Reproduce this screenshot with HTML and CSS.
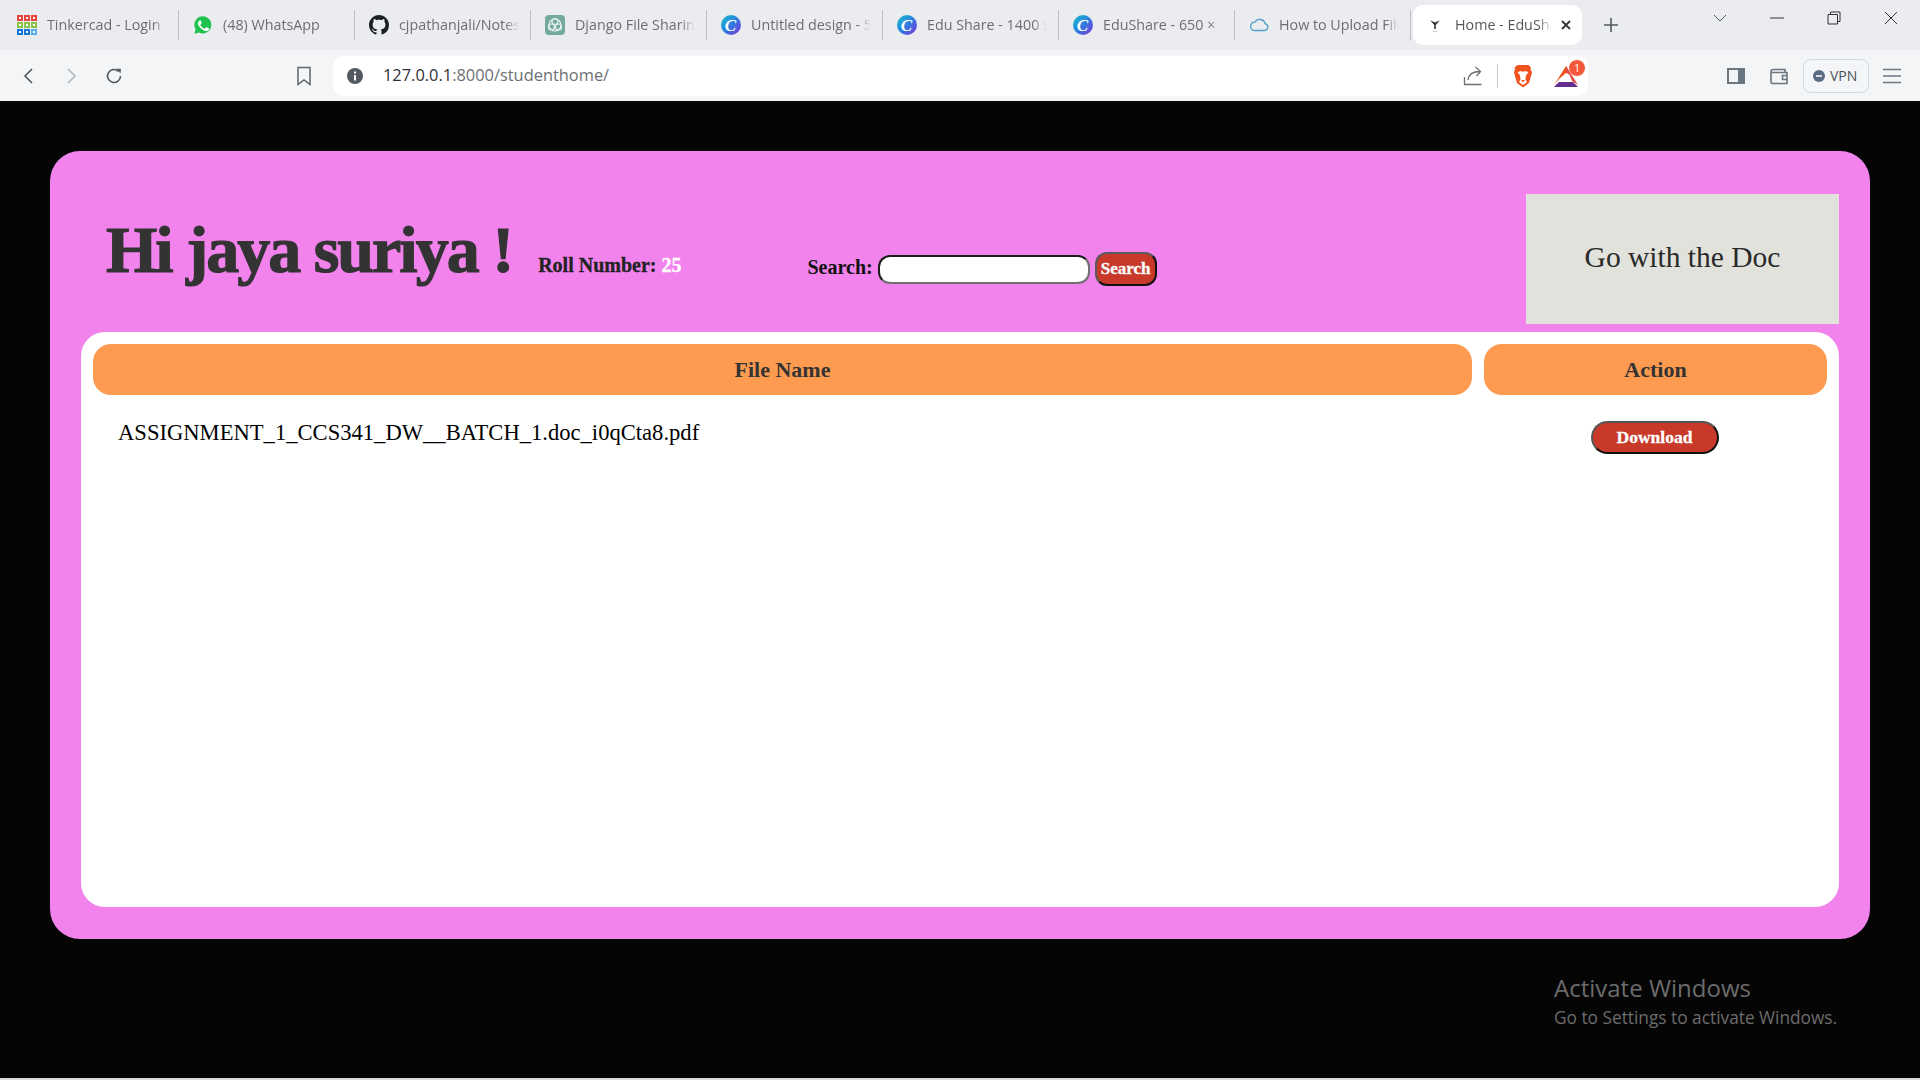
FILE: index.html
```html
<!DOCTYPE html>
<html lang="en">
<head>
<meta charset="utf-8">
<title>Home - EduShare</title>
<link rel="stylesheet" href="styles.css">
</head>
<body>
<div class="window">
  <div class="tabstrip">
    <div class="tab">
      <svg class="fav" viewBox="0 0 20 20"><g fill="#e8453c"><rect width="6" height="6"/><rect x="7" width="6" height="6"/><rect x="14" width="6" height="6"/></g><g fill="#8bc34a"><rect y="7" width="6" height="6"/><rect x="7" y="7" width="6" height="6"/><rect x="14" y="7" width="6" height="6"/></g><g fill="#1477d4"><rect y="14" width="6" height="6"/><rect x="7" y="14" width="6" height="6"/><rect x="14" y="14" width="6" height="6" fill="#5ab0e6"/></g><g fill="#fff"><rect x="2" y="2" width="2" height="2"/><rect x="9" y="2" width="2" height="2"/><rect x="16" y="2" width="2" height="2"/><rect x="2" y="9" width="2" height="2"/><rect x="9" y="9" width="2" height="2"/><rect x="16" y="9" width="2" height="2"/><rect x="2" y="16" width="2" height="2"/><rect x="9" y="16" width="2" height="2"/><rect x="16" y="16" width="2" height="2"/></g></svg>
      <span class="title">Tinkercad - Login</span>
    </div>
    <div class="tab">
      <svg class="fav" viewBox="0 0 20 20"><path fill="#1fc14f" d="M10 1.200a8.600 8.600 0 0 0-7.400 13L1.400 18.800l4.700-1.200A8.600 8.600 0 1 0 10 1.200z"/><path fill="#fff" d="M7 5.400c-.3 0-.7.1-1 .5-.4.5-1 1.200-1 2.500s1 2.700 1.100 2.900c.2.200 1.900 3 4.700 4.100 2.300.9 2.800.7 3.300.7.500-.1 1.600-.7 1.800-1.300.2-.6.2-1.200.2-1.300-.1-.1-.3-.2-.6-.4l-1.900-.9c-.3-.1-.5-.1-.7.2l-.9 1.100c-.2.200-.3.200-.6.100-.3-.2-1.200-.5-2.300-1.400-.8-.8-1.400-1.700-1.600-2-.1-.3 0-.4.100-.6l.9-1.100c.1-.2.100-.4 0-.5L8 6c-.2-.5-.4-.6-.6-.6z"/></svg>
      <span class="title">(48) WhatsApp</span>
    </div>
    <div class="tab">
      <svg class="fav" viewBox="0 0 16 16"><path fill="#1b1f23" d="M8 0C3.580 0 0 3.580 0 8c0 3.540 2.290 6.530 5.470 7.590.4.070.55-.170.55-.380 0-.190-.010-.820-.010-1.490-2.010.370-2.530-.490-2.690-.940-.090-.230-.480-.940-.820-1.130-.280-.150-.680-.520-.010-.530.630-.010 1.080.580 1.230.820.720 1.210 1.870.870 2.330.660.070-.520.280-.870.510-1.070-1.780-.200-3.640-.890-3.640-3.950 0-.870.310-1.590.820-2.150-.080-.200-.360-1.020.080-2.120 0 0 .670-.210 2.200.820.640-.180 1.320-.270 2-.270s1.360.090 2 .270c1.530-1.040 2.200-.820 2.200-.820.440 1.100.160 1.920.080 2.120.510.560.820 1.270.820 2.150 0 3.070-1.870 3.750-3.650 3.950.290.250.540.730.540 1.480 0 1.070-.010 1.930-.010 2.200 0 .210.150.460.550.380A8.010 8.010 0 0 0 16 8c0-4.420-3.580-8-8-8z"/></svg>
      <span class="title">cjpathanjali/Notes</span>
    </div>
    <div class="tab">
      <svg class="fav" viewBox="0 0 20 20"><rect width="20" height="20" rx="4" fill="#74aa9c"/><g fill="none" stroke="#e6f2ef" stroke-width="1.200"><circle cx="10" cy="6.500" r="3"/><circle cx="6.500" cy="12" r="3"/><circle cx="13.500" cy="12" r="3"/><circle cx="10" cy="10" r="6"/></g></svg>
      <span class="title">Django File Sharing</span>
    </div>
    <div class="tab">
      <svg class="fav" viewBox="0 0 20 20"><defs><linearGradient id="cv" x1="0" y1="0" x2="1" y2="1"><stop offset="0" stop-color="#10c5c9"/><stop offset=".5" stop-color="#2f7ee0"/><stop offset="1" stop-color="#7b2fd8"/></linearGradient></defs><circle cx="10" cy="10" r="10" fill="url(#cv)"/><text x="9.500" y="15.500" class="canva">C</text></svg>
      <span class="title">Untitled design - 5</span>
    </div>
    <div class="tab">
      <svg class="fav" viewBox="0 0 20 20"><circle cx="10" cy="10" r="10" fill="url(#cv)"/><text x="9.500" y="15.500" class="canva">C</text></svg>
      <span class="title">Edu Share - 1400 x</span>
    </div>
    <div class="tab">
      <svg class="fav" viewBox="0 0 20 20"><circle cx="10" cy="10" r="10" fill="url(#cv)"/><text x="9.500" y="15.500" class="canva">C</text></svg>
      <span class="title">EduShare - 650 × 1</span>
    </div>
    <div class="tab">
      <svg class="fav" viewBox="0 0 20 20"><path fill="none" stroke="#4f9fc9" stroke-width="1.300" d="M5 15.500h10.500a3.500 3.500 0 0 0 .6-6.900A5.500 5.500 0 0 0 6 7.200 4.200 4.200 0 0 0 5 15.500z"/></svg>
      <span class="title">How to Upload Files</span>
    </div>
    <div class="tab-active">
      <svg class="fav-small" viewBox="0 0 20 20"><path fill="#333" d="M4 4l5 6v5h2v-5l5-6-6 3z"/><path fill="#ccc" d="M7 17h6v1.500H7z"/></svg>
      <span class="title-active">Home - EduShare</span>
      <svg class="tab-close" viewBox="0 0 12 12"><path stroke="#333" stroke-width="1.800" d="M2 2l8 8M10 2l-8 8"/></svg>
    </div>
    <svg class="new-tab" viewBox="0 0 16 16"><path stroke="#55585c" stroke-width="1.600" d="M8 1v14M1 8h14"/></svg>
    <div class="win-controls">
      <svg class="win-icon" viewBox="0 0 14 14"><path fill="none" stroke="#55585c" d="M1 4l6 6 6-6"/></svg>
      <svg class="win-icon" viewBox="0 0 14 14"><path stroke="#333" d="M0 7h14"/></svg>
      <svg class="win-icon" viewBox="0 0 14 14"><path fill="none" stroke="#333" d="M1 3.500h9.500V13H1zM3.500 3.500V1H13v9.500h-2.500"/></svg>
      <svg class="win-icon" viewBox="0 0 14 14"><path stroke="#333" d="M1 1l12 12M13 1L1 13"/></svg>
    </div>
  </div>

  <div class="toolbar">
    <svg class="nav-icon" viewBox="0 0 18 18"><path fill="none" stroke="#50565c" stroke-width="1.600" d="M13 2L6 9l7 7"/></svg>
    <svg class="nav-icon" viewBox="0 0 18 18"><path fill="none" stroke="#b4bac0" stroke-width="1.600" d="M6 2l7 7-7 7"/></svg>
    <svg class="nav-icon" viewBox="0 0 18 18"><path fill="none" stroke="#50565c" stroke-width="1.600" d="M15.500 9a6.500 6.500 0 1 1-2-4.700"/><path fill="#50565c" d="M11.500 1.500l4.500.5-.5 4.500z"/></svg>
    <svg class="bookmark" viewBox="0 0 16 20"><path fill="none" stroke="#5f666d" stroke-width="1.500" d="M2 1.500h12v17l-6-4.500-6 4.500z"/></svg>
    <div class="address">
      <svg class="info" viewBox="0 0 16 16"><circle cx="8" cy="8" r="8" fill="#54595f"/><path fill="#fff" d="M7 7h2v5.500H7zM7 3.500h2v2H7z"/></svg>
      <span class="url"><span class="host">127.0.0.1</span>:8000/studenthome/</span>
      <svg class="share" viewBox="0 0 20 20"><path fill="none" stroke="#6a7076" stroke-width="1.300" d="M1.500 11v7.500h17M5 14c.5-5 4-8.500 12-8.500M12.500 1L17.500 5.500 13.500 10"/></svg>
      <span class="addr-sep"></span>
      <svg class="brave" viewBox="0 0 20 24"><path fill="#f1531f" d="M4.500 1h11l2.500 2.500-.5 1.500 1.500 3.500-3 10.500-6 4.500-6-4.500-3-10.500L2 5l-.5-1.500z"/><path fill="#fff" d="M4.500 8l4-1 1.500 1 1.500-1 4 1-2.500 3.500-.5 4 1.500 2.500-4 3-4-3 1.500-2.500-.5-4z"/><path fill="#f1531f" d="M8 16h4l-2 2.500z"/></svg>
      <div class="bat">
        <svg class="bat-icon" viewBox="0 0 24 22"><path fill="#e8483c" d="M12 1l5 9-5-2z"/><path fill="#f1531f" d="M12 1v7l-7 6-5 6z"/><path fill="#e8483c" d="M12 1l12 19-6-4z"/><path fill="#662d91" d="M0 22l5-5h14l5 5z"/><path fill="#fff" d="M12 9l4.500 7h-9z"/></svg>
        <span class="badge">1</span>
      </div>
    </div>
    <svg class="tool-icon sidebar" viewBox="0 0 20 20"><path fill="none" stroke="#6a7680" stroke-width="2" d="M2 3h16v14H2z"/><path fill="#6a7680" d="M12 3h6v14h-6z"/></svg>
    <svg class="tool-icon wallet" viewBox="0 0 20 20"><path fill="none" stroke="#6a7680" stroke-width="1.600" d="M2 5.500a2 2 0 0 1 2-2h12v3M2 5.500V16a1.500 1.500 0 0 0 1.500 1.500H18v-11H3.500A1.500 1.500 0 0 1 2 5.500zM18 9.500h-4.500v4H18"/></svg>
    <div class="vpn">
      <svg class="vpn-dot" viewBox="0 0 12 12"><circle cx="6" cy="6" r="6" fill="#5c6b85"/><path stroke="#fff" stroke-width="1.500" d="M3 6h6"/></svg>
      <span>VPN</span>
    </div>
    <svg class="tool-icon menu" viewBox="0 0 18 18"><path stroke="#6a7680" stroke-width="1.400" d="M0 2.500h18M0 9h18M0 15.500h18"/></svg>
  </div>

  <main class="viewport">
    <section class="card">
      <header class="head">
        <div class="greeting">
          <div class="intro">
            <h1 class="hello">Hi jaya suriya !</h1>
            <p class="roll">Roll Number: <span class="roll-no">25</span></p>
          </div>
          <form class="search">
            <label class="search-label" for="q">Search:</label>
            <input class="search-input" id="q" type="text">
            <button class="search-btn" type="button">Search</button>
          </form>
        </div>
        <div class="logo">Go with the Doc</div>
      </header>
      <div class="panel">
        <div class="col-head">File Name</div>
        <div class="col-head">Action</div>
        <div class="file-name">ASSIGNMENT_1_CCS341_DW__BATCH_1.doc_i0qCta8.pdf</div>
        <div class="file-action"><button class="download" type="button">Download</button></div>
      </div>
    </section>
    <div class="watermark">
      <div class="wm-title">Activate Windows</div>
      <div class="wm-sub">Go to Settings to activate Windows.</div>
    </div>
  </main>
  <div class="strip"></div>
</div>
</body>
</html>
```

FILE: styles.css
```css
* { box-sizing: border-box; }
html, body { margin: 0; padding: 0; height: 100%; overflow: hidden; }
body { font-family: "Open Sans", "Noto Sans", sans-serif; background: #050505; }

.window { display: flex; flex-direction: column; height: 1080px; }

/* Tab strip */
.tabstrip { display: flex; align-items: center; height: 50px; padding-left: 3px; background: #ebecf0; flex: none; }
.tab { display: flex; align-items: center; width: 176px; height: 30px; padding: 0 11px 0 14px; border-right: 1px solid #bdbfc3; flex: none; }
.fav { width: 20px; height: 20px; margin-right: 10px; flex: none; }
.canva { font-family: "Liberation Serif", serif; font-style: italic; font-weight: 700; font-size: 17px; fill: #fff; text-anchor: middle; }
.title { flex: 1; min-width: 0; padding-bottom: 2px; font-size: 14.300px; color: #6d6e73; white-space: nowrap; overflow: hidden; -webkit-mask-image: linear-gradient(to right, #000 calc(100% - 14px), transparent 100%); mask-image: linear-gradient(to right, #000 calc(100% - 14px), transparent 100%); }
.tab-active { display: flex; align-items: center; width: 169px; height: 40px; margin-left: 2px; padding: 0 10px 0 14px; background: #fff; border-radius: 10px; flex: none; }
.fav-small { width: 16px; height: 16px; margin-right: 12px; flex: none; }
.title-active { flex: 1; min-width: 0; padding-bottom: 2px; font-size: 14.300px; color: #55575b; white-space: nowrap; overflow: hidden; -webkit-mask-image: linear-gradient(to right, #000 calc(100% - 14px), transparent 100%); mask-image: linear-gradient(to right, #000 calc(100% - 14px), transparent 100%); }
.tab-close { width: 12px; height: 12px; margin-left: 8px; flex: none; }
.new-tab { width: 16px; height: 16px; margin-left: 21px; flex: none; }
.win-controls { display: flex; align-items: center; gap: 43px; margin-left: auto; margin-right: 22px; margin-top: -14px; }
.win-icon { width: 14px; height: 14px; flex: none; }

/* Toolbar */
.toolbar { display: flex; align-items: center; height: 51px; padding: 0 20px 0 19px; background: #f4f5f7; flex: none; }
.nav-icon { width: 18px; height: 18px; margin-right: 25px; flex: none; }
.bookmark { width: 16px; height: 20px; margin-left: 148px; margin-right: 21px; flex: none; }
.address { display: flex; align-items: center; width: 1255px; height: 40px; padding: 0 10px 0 14px; background: #fff; border-radius: 10px; flex: none; }
.info { width: 16px; height: 16px; margin-right: 20px; flex: none; }
.url { flex: 1; padding-bottom: 2px; font-size: 16.400px; color: #6b6f74; white-space: nowrap; }
.host { color: #303236; }
.share { width: 20px; height: 20px; margin-right: 14px; flex: none; }
.addr-sep { width: 1px; height: 24px; background: #c8cbcf; margin-right: 15px; flex: none; }
.brave { width: 20px; height: 24px; margin-right: 21px; flex: none; }
.bat { position: relative; width: 24px; height: 22px; flex: none; }
.bat-icon { width: 24px; height: 22px; display: block; }
.badge { position: absolute; top: -5px; right: -7px; width: 16px; height: 16px; border-radius: 50%; background: #f4583c; color: #fff; font-size: 10px; line-height: 16px; text-align: center; }
.tool-icon { width: 20px; height: 20px; flex: none; }
.sidebar { margin-left: 138px; }
.wallet { margin-left: 23px; }
.vpn { display: flex; align-items: center; gap: 5px; width: 66px; height: 34px; margin-left: 14px; padding-left: 9px; border: 1px solid #d6dade; border-radius: 8px; font-size: 14px; color: #4c5258; flex: none; }
.vpn-dot { width: 12px; height: 12px; flex: none; }
.menu { width: 18px; height: 18px; margin-left: 14px; }

/* Page */
.viewport { position: relative; flex: 1; min-height: 0; padding: 50px 50px 0; background: #050505; }
.card { display: flex; flex-direction: column; height: 788px; padding: 43px 31px 32px; background: #f283ec; border-radius: 30px; }
.head { display: flex; align-items: flex-start; height: 130px; margin-bottom: 8px; flex: none; }
.greeting { display: flex; align-items: flex-start; padding: 18px 0 0 25px; }
.intro { display: flex; align-items: baseline; }
.hello { margin: 0; font-family: "Liberation Serif", serif; font-weight: 700; font-size: 66px; letter-spacing: -2px; color: #333; -webkit-text-stroke: 1.200px #333; white-space: nowrap; }
.roll { margin: 0 0 0 26px; font-family: "Liberation Serif", serif; font-weight: 700; font-size: 20px; color: #222; white-space: nowrap; -webkit-text-stroke: 0.300px #222; }
.roll-no { color: #fff; -webkit-text-stroke-color: #fff; }
.search { display: flex; align-items: baseline; margin: 40px 0 0 126px; }
.search-label { font-family: "Liberation Serif", serif; font-weight: 700; font-size: 20px; color: #111; }
.search-input { width: 212px; height: 29px; margin-left: 5px; padding: 0 8px; background: #fff; border: 2px solid; border-color: #1c1c1c #707070 #707070 #1c1c1c; border-radius: 12px; outline: none; }
.search-btn { width: 62px; height: 34px; margin-left: 5px; padding: 0; background: #c8392a; border: 2px solid; border-color: #5a5a5a #111 #111 #5a5a5a; border-radius: 12px; font-family: "Liberation Serif", serif; font-weight: 700; font-size: 17px; color: #fff; -webkit-text-stroke: 0.300px #fff; }
.logo { display: flex; align-items: center; justify-content: center; width: 313px; height: 130px; margin-left: auto; background: #e2e2dc; font-family: "Liberation Serif", serif; font-size: 29.500px; color: #2a2a2a; flex: none; padding-bottom: 4px; }

.panel { flex: 1; display: grid; grid-template-columns: 1379px 1fr; grid-template-rows: 51px auto; align-content: start; column-gap: 12px; padding: 12px; background: #fff; border-radius: 24px; }
.col-head { display: flex; align-items: center; justify-content: center; background: #ff9b50; border-radius: 18px; font-family: "Liberation Serif", serif; font-weight: 700; font-size: 22px; color: #333; }
.file-name { padding: 25px 0 0 25px; font-family: "Liberation Serif", serif; font-size: 22.600px; line-height: 26px; color: #000; }
.file-action { display: flex; justify-content: center; padding: 26px 2px 0 0; }
.download { width: 128px; height: 33px; padding: 0; background: #c8392a; border: 2px solid; border-color: #555 #111 #111 #555; border-radius: 17px; font-family: "Liberation Serif", serif; font-weight: 700; font-size: 17.500px; color: #fff; -webkit-text-stroke: 0.300px #fff; }

.watermark { position: absolute; left: 1554px; top: 871px; color: #6c6c6c; white-space: nowrap; }
.wm-title { font-size: 24px; line-height: 32px; }
.wm-sub { font-size: 17.300px; line-height: 28px; }
.strip { height: 2px; background: #dcdcdc; flex: none; }
```
